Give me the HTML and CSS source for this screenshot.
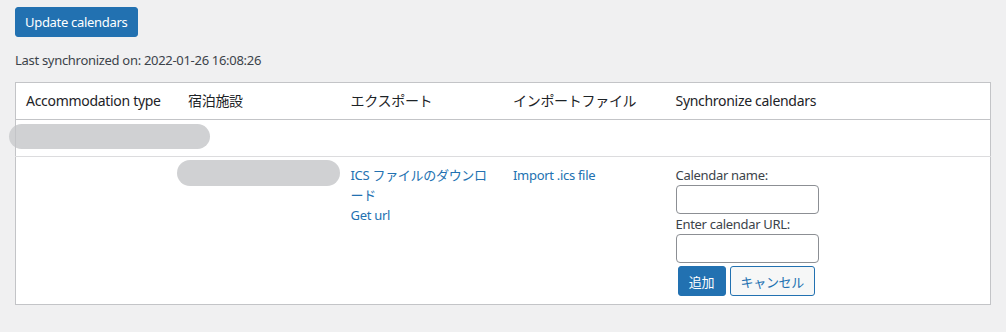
FILE: index.html
```html
<!DOCTYPE html>
<html lang="ja">
<head>
    <meta charset="utf-8" />
    <title>Sync calendars</title>
    <link rel="stylesheet" href="styles.css">
</head>
<body>
    <div class="wrap">
        <button class="button-primary">Update calendars</button>
        <p class="last-sync">Last synchronized on: 2022-01-26 16:08:26</p>

        <table class="widefat">
            <thead>
                <tr>
                    <th>Accommodation type</th>
                    <th>宿泊施設</th>
                    <th>エクスポート</th>
                    <th>インポートファイル</th>
                    <th class="wide">Synchronize calendars</th>
                    <th></th>
                </tr>
            </thead>
            <tbody>
                <tr class="group-row">
                    <td><span class="blur blur-type"></span></td>
                    <td></td>
                    <td></td>
                    <td></td>
                    <td></td>
                    <td></td>
                </tr>
                <tr>
                    <td></td>
                    <td><span class="blur blur-room"></span></td>
                    <td>
                        <a href="#">ICS ファイルのダウンロード</a><br>
                        <a href="#">Get url</a>
                    </td>
                    <td><a href="#">Import .ics file</a></td>
                    <td>
                        <label class="field-label">Calendar name:</label>
                        <input type="text" class="field-input">
                        <label class="field-label">Enter calendar URL:</label>
                        <input type="text" class="field-input">
                        <div class="actions">
                            <button class="button-primary small">追加</button>
                            <button class="button-secondary">キャンセル</button>
                        </div>
                    </td>
                    <td></td>
                </tr>
            </tbody>
        </table>
    </div>
</body>
</html>
```

FILE: styles.css
```css
* {
    box-sizing: border-box;
}

body {
    margin: 0;
    background: #f0f0f1;
    color: #3c434a;
    font-family: "Noto Sans", "Noto Sans CJK JP", sans-serif;
    font-size: 13px;
    line-height: 1.5;
    letter-spacing: -0.3px;
}

.wrap {
    padding: 7px 15px 0 15px;
}

button {
    font-family: inherit;
    font-size: 13px;
    letter-spacing: inherit;
    height: 30px;
    padding: 0 9px;
    border-radius: 3px;
    cursor: pointer;
}

.button-primary {
    background: #2271b1;
    border: 1px solid #2271b1;
    color: #fff;
}

.button-secondary {
    background: #f6f7f7;
    border: 1px solid #2271b1;
    color: #2271b1;
    padding: 0 10px;
}

.last-sync {
    margin: 13px 0 12px;
    line-height: 20px;
}

.widefat {
    width: 976px;
    table-layout: fixed;
    border-collapse: collapse;
    background: #fff;
    border: 1px solid #c3c4c7;
}

.widefat th {
    text-align: left;
    font-weight: 400;
    font-size: 14px;
    color: #1d2327;
    padding: 8px 10px;
    line-height: 20px;
    border-bottom: 1px solid #c3c4c7;
    white-space: nowrap;
}

.widefat td {
    padding: 8px 10px;
    vertical-align: top;
    line-height: 20px;
}

.group-row td {
    border-bottom: 1px solid #dcdcde;
}

a {
    color: #2271b1;
    text-decoration: none;
}

.blur {
    display: block;
    background: #d0d1d3;
    border-radius: 13px;
}

.blur-type {
    width: 201px;
    height: 25px;
    margin: -4px 0 -1px -17px;
}

.blur-room {
    width: 163px;
    height: 26px;
    margin: -5px 0 0 -11px;
}

.field-label {
    display: block;
    line-height: 20px;
}

.field-input {
    display: block;
    width: 143px;
    height: 29px;
    border: 1px solid #8c8f94;
    border-radius: 4px;
    margin: 0;
}

.actions {
    display: flex;
    gap: 4px;
    margin: 3px 0 0 2px;
}

.small {
    width: 48px;
    padding: 0;
}
```
